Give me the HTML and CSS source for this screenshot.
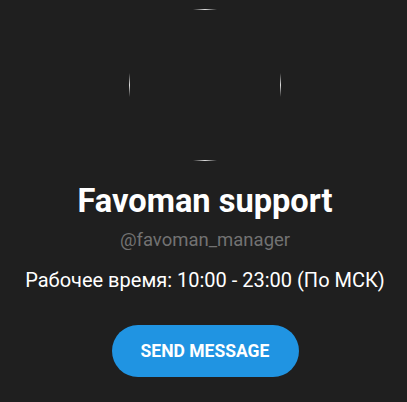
FILE: index.html
```html
<!DOCTYPE html>
<html lang="ru">
<head>
<meta charset="utf-8">
<link rel="stylesheet" href="styles.css">
</head>
<body>
<main class="card">
  <div class="avatar">
    <svg width="152" height="152" viewBox="0 0 152 152">
      <defs>
        <linearGradient id="gh" x1="0" y1="0" x2="1" y2="0">
          <stop offset="0" stop-color="#fff" stop-opacity="0"/>
          <stop offset="0.5" stop-color="#fff" stop-opacity="0.85"/>
          <stop offset="1" stop-color="#fff" stop-opacity="0"/>
        </linearGradient>
        <linearGradient id="gv" x1="0" y1="0" x2="0" y2="1">
          <stop offset="0" stop-color="#fff" stop-opacity="0"/>
          <stop offset="0.5" stop-color="#fff" stop-opacity="0.85"/>
          <stop offset="1" stop-color="#fff" stop-opacity="0"/>
        </linearGradient>
      </defs>
      <rect x="64" y="0" width="24" height="1" fill="url(#gh)"/>
      <rect x="64" y="151" width="24" height="1" fill="url(#gh)"/>
      <rect x="0" y="64" width="1" height="24" fill="url(#gv)"/>
      <rect x="151" y="64" width="1" height="24" fill="url(#gv)"/>
    </svg>
  </div>
  <h1 class="title">Favoman support</h1>
  <p class="username">@favoman_manager</p>
  <p class="hours">Рабочее время: 10:00 - 23:00 (По МСК)</p>
  <button class="send">SEND MESSAGE</button>
</main>
</body>
</html>
```
FILE: styles.css
```css
html, body {
  margin: 0;
  padding: 0;
  background: #1f1f1f;
  height: 100%;
}
body {
  font-family: Roboto, "Noto Sans", sans-serif;
  color: #fff;
}
.card {
  display: flex;
  flex-direction: column;
  align-items: center;
  padding-top: 9px;
  padding-left: 3px;
}
.avatar {
  width: 152px;
  height: 152px;
  display: block;
}
.avatar svg {
  display: block;
}
.title {
  margin: 20px 0 0;
  font-size: 32.6px;
  font-weight: 700;
  line-height: 40px;
}
.username {
  margin: 7px 0 0;
  font-size: 18.5px;
  line-height: 24px;
  color: #727272;
}
.hours {
  margin: 15px 0 0;
  font-size: 20px;
  line-height: 26px;
}
.send {
  margin-top: 32px;
  width: 187px;
  height: 52px;
  border: none;
  border-radius: 26px;
  background: #2094e2;
  color: #fff;
  font-family: Roboto, sans-serif;
  font-weight: 700;
  font-size: 17.5px;
  padding: 0;
}
```
